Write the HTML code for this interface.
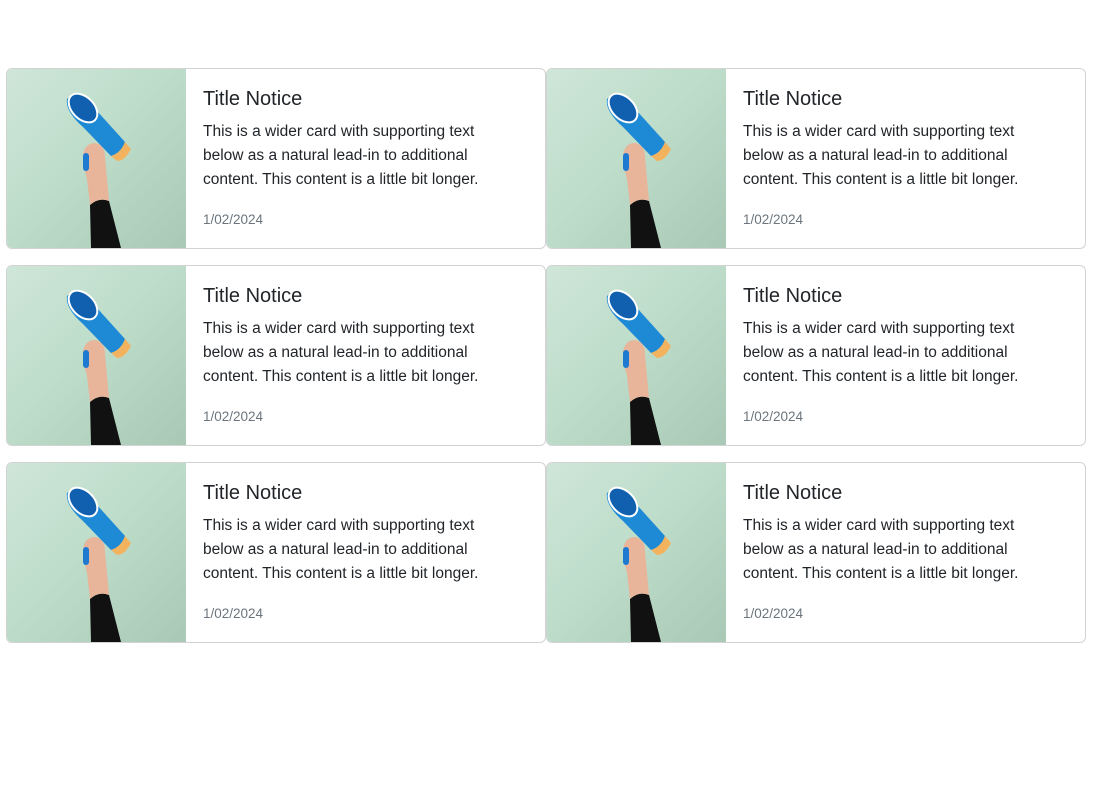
<!DOCTYPE html>
<html><head><style>
body{margin:0;background:#fff;font-family:"Liberation Sans",sans-serif;}
.card{position:absolute;width:538px;height:179px;border:1px solid #d3d3d3;border-radius:6px;overflow:hidden;background:#fff;}
.img{position:absolute;left:0;top:0;width:179px;height:179px;background:linear-gradient(135deg,#cfe6d8 0%,#bcdcc9 50%,#a9c9b6 100%);}
.txt{position:absolute;left:196px;top:18px;width:300px;color:#212529;}
.t{font-size:20px;line-height:24px;margin:0 0 9px;}
.p{font-size:15.5px;line-height:24px;margin:0;}
.d{font-size:13.5px;color:#6c757d;margin-top:20px;}
</style></head><body>
<div id="c"></div>
<script>
var svg='<svg width="179" height="179" viewBox="0 0 179 179"><path d="M84 179 L83 136 Q92 128 102 132 L114 179Z" fill="#111"/><path d="M83 136 L80 110 Q76 96 76 86 Q78 74 88 74 Q98 76 98 88 L102 132 Q92 128 83 136Z" fill="#e8b49a"/><path d="M60 30 Q70 20 90 42 L118 73 Q114 84 104 87 L76 58 Q58 42 60 30Z" fill="#1e8ad6"/><ellipse cx="76" cy="39" rx="11" ry="17" transform="rotate(-45 76 39)" fill="#1160b0" stroke="#fff" stroke-width="2"/><path d="M104 87 Q114 84 118 73 L124 80 Q118 92 110 92Z" fill="#f3b35e"/><rect x="76" y="84" width="6" height="18" rx="3" fill="#1e7ad0"/></svg>';
var h='';
for(var r=0;r<3;r++)for(var c=0;c<2;c++){
h+='<div class="card" style="left:'+(6+c*540)+'px;top:'+(68+r*197)+'px"><div class="img">'+svg+'</div><div class="txt"><div class="t">Title Notice</div><p class="p">This is a wider card with supporting text below as a natural lead-in to additional content. This content is a little bit longer.</p><div class="d">1/02/2024</div></div></div>';}
document.getElementById('c').innerHTML=h;
</script>
</body></html>
